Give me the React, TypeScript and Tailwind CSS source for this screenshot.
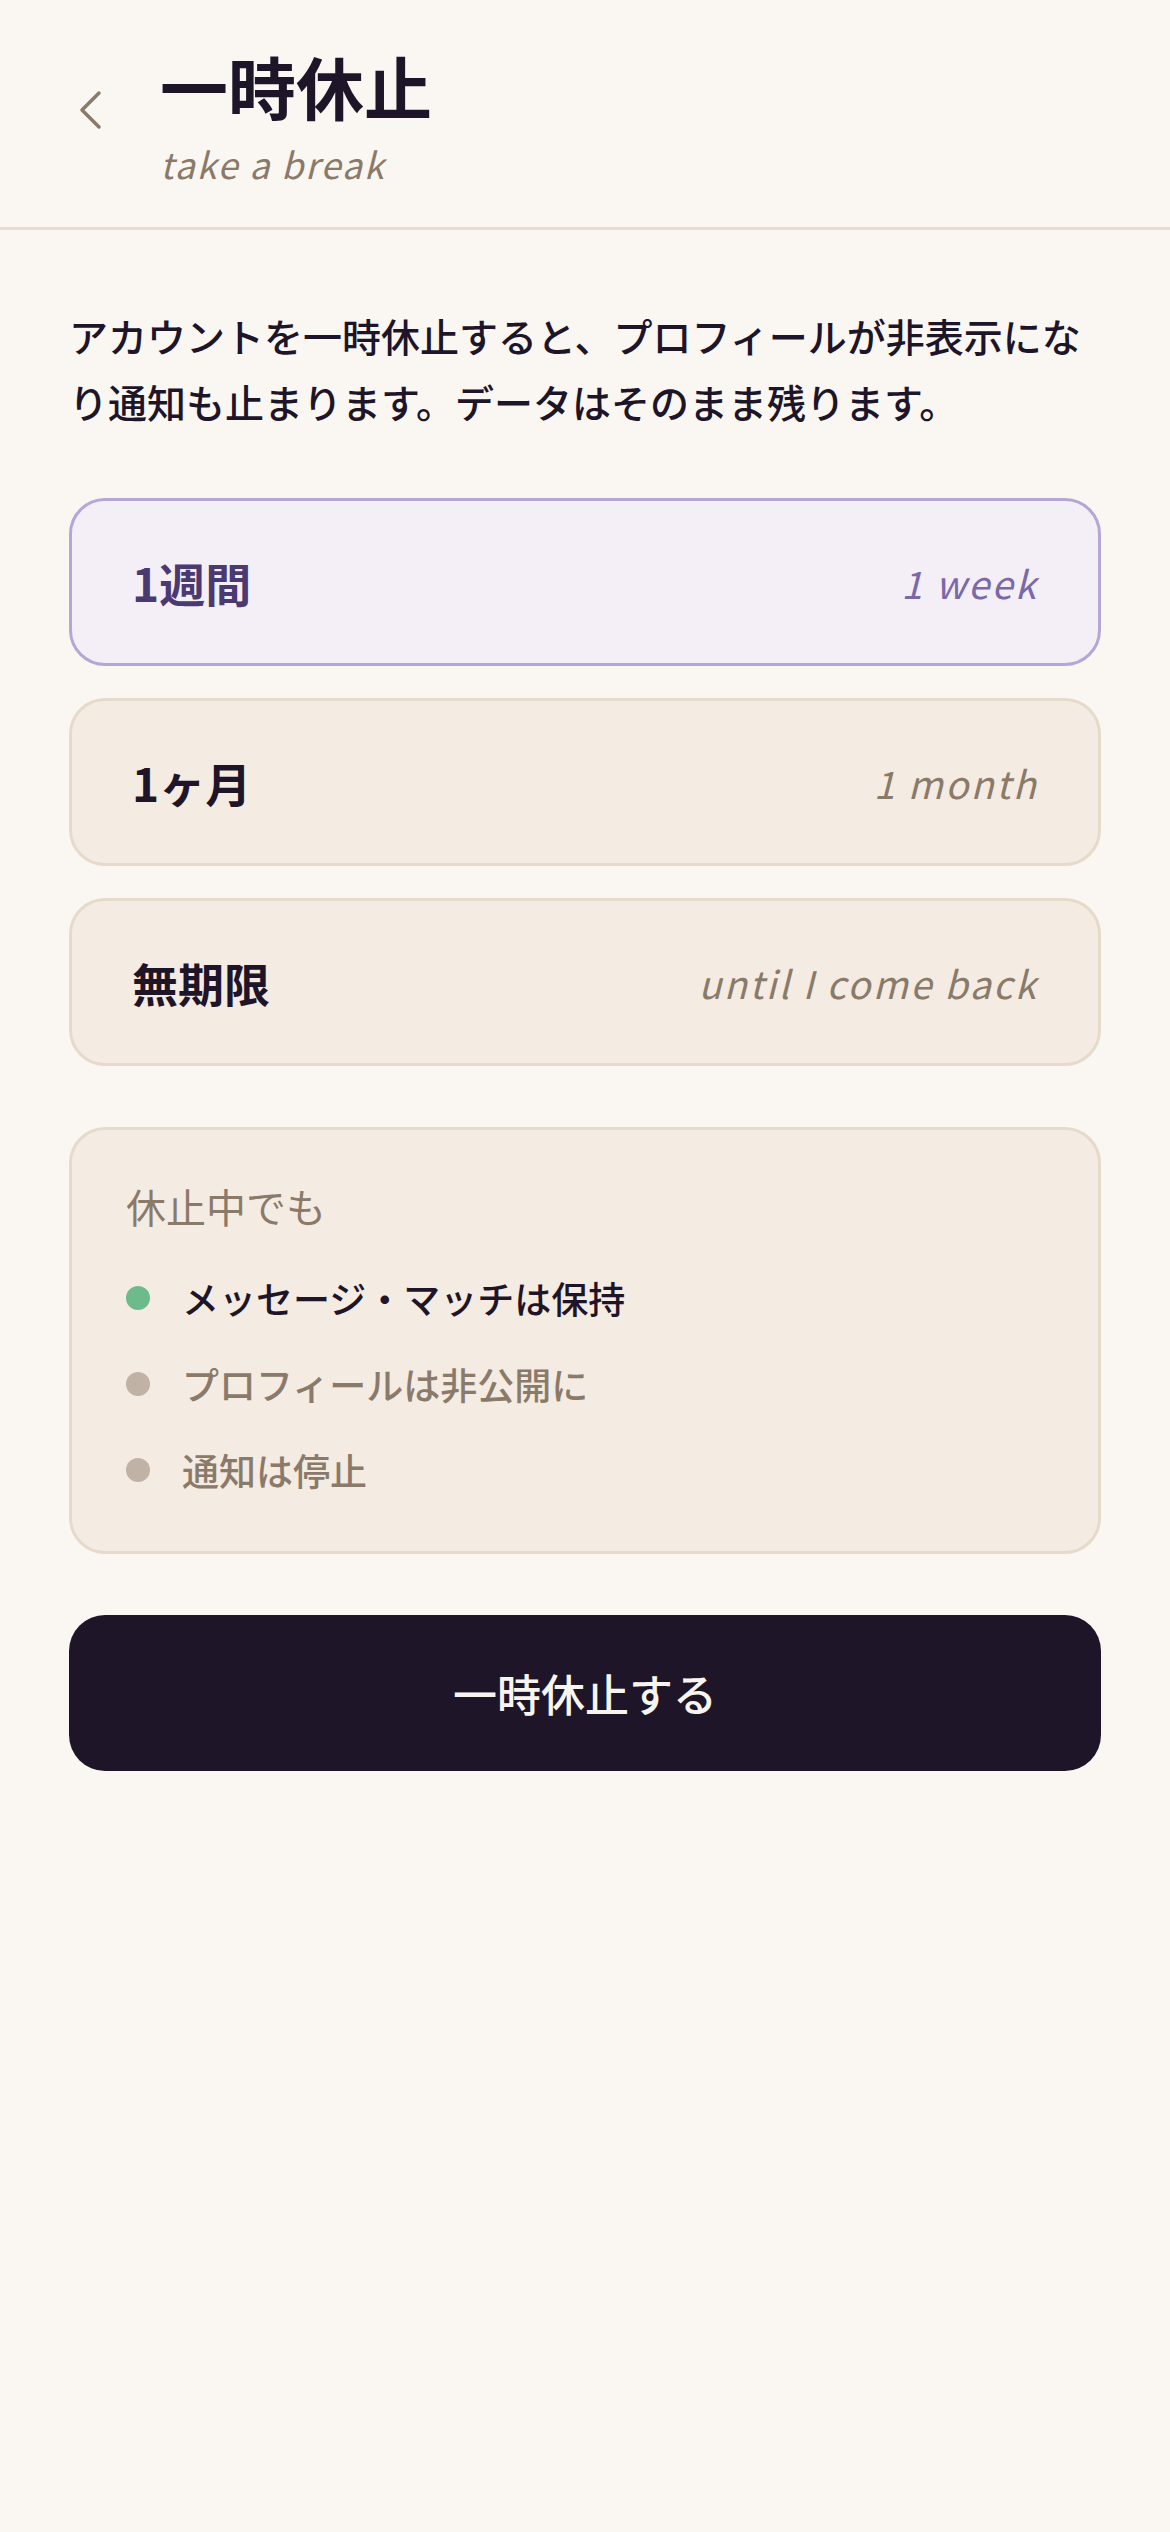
import React from "react";

const jp = "font-['Noto_Sans_CJK_JP','Noto_Sans',sans-serif]";

const options = [
    { id: "week", label: "1週間", sub: "1 week", selected: true },
    { id: "month", label: "1ヶ月", sub: "1 month", selected: false },
    { id: "forever", label: "無期限", sub: "until I come back", selected: false },
];

const notes = [
    { text: "メッセージ・マッチは保持", kept: true },
    { text: "プロフィールは非公開に", kept: false },
    { text: "通知は停止", kept: false },
];

export default function App() {
    return (
        <div className={`min-h-screen w-full bg-[#faf7f3] ${jp}`}>
            <header className="flex items-start border-b-[3px] border-[#e6dbcd] pl-[78px] pt-[48px] pb-[42px]">
                <button className="mt-[42px] mr-[56px] flex h-[40px] w-[26px] items-center justify-center">
                    <svg width="24" height="40" viewBox="0 0 24 40" fill="none">
                        <polyline
                            points="20,3 3,20 20,37"
                            stroke="#8a7a6a"
                            strokeWidth="3.5"
                            strokeLinecap="round"
                            strokeLinejoin="round"
                        />
                    </svg>
                </button>
                <div className="flex flex-col">
                    <h1 className="text-[68px] font-semibold leading-[76px] text-[#1e1528]">一時休止</h1>
                    <p className="mt-[17px] text-[36px] italic leading-[44px] tracking-[0.05em] text-[#8a7a6a]">
                        take a break
                    </p>
                </div>
            </header>

            <main className="px-[69px] pt-[72px]">
                <p className="text-[39px] font-medium leading-[66px] text-[#1e1528]">
                    アカウントを一時休止すると、プロフィールが非表示になり通知も止まります。データはそのまま残ります。
                </p>

                <div className="mt-[64px] flex flex-col gap-[32px]">
                    {options.map((o) => (
                        <div
                            key={o.id}
                            className={
                                o.selected
                                    ? "flex h-[168px] items-center justify-between rounded-[36px] border-[3px] border-[#b6a6d6] bg-[#f4eff7] px-[60px]"
                                    : "flex h-[168px] items-center justify-between rounded-[36px] border-[3px] border-[#e6dacb] bg-[#f4ebe2] px-[60px]"
                            }
                        >
                            <span
                                className={
                                    o.selected
                                        ? "text-[46px] font-semibold text-[#4b3a72]"
                                        : "text-[46px] font-semibold text-[#1e1528]"
                                }
                            >
                                {o.label}
                            </span>
                            <span
                                className={
                                    o.selected
                                        ? "text-[38px] italic tracking-[0.06em] text-[#7a68a8]"
                                        : "text-[38px] italic tracking-[0.06em] text-[#8a7a6a]"
                                }
                            >
                                {o.sub}
                            </span>
                        </div>
                    ))}
                </div>

                <div className="mt-[61px] rounded-[36px] border-[3px] border-[#e6dacb] bg-[#f4ebe2] px-[54px] pt-[46px] pb-[51px]">
                    <div className="text-[40px] leading-[60px] text-[#8a7a6a]">休止中でも</div>
                    <ul className="mt-[32px] flex flex-col gap-[26px]">
                        {notes.map((n) => (
                            <li key={n.text} className="flex items-center gap-[32px] leading-[60px]">
                                <span
                                    className={
                                        n.kept
                                            ? "h-[24px] w-[24px] rounded-full bg-[#6dbb8a]"
                                            : "h-[24px] w-[24px] rounded-full bg-[#c0b2a4]"
                                    }
                                />
                                <span
                                    className={
                                        n.kept
                                            ? "text-[37px] font-medium text-[#1e1528]"
                                            : "text-[37px] font-medium text-[#8a7a6a]"
                                    }
                                >
                                    {n.text}
                                </span>
                            </li>
                        ))}
                    </ul>
                </div>

                <button className="mt-[61px] flex h-[156px] w-full items-center justify-center rounded-[36px] bg-[#1e1528] text-[44px] font-medium text-[#f8f4ef]">
                    一時休止する
                </button>
            </main>
        </div>
    );
}
